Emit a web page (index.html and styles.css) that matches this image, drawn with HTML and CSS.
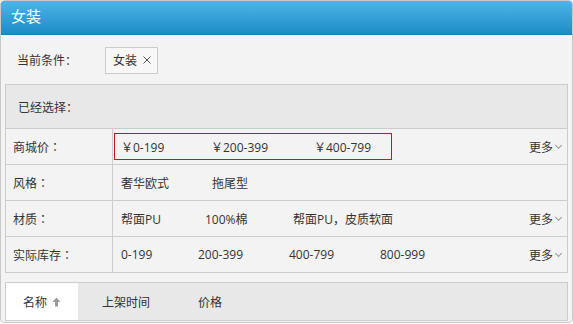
FILE: index.html
```html
<!DOCTYPE html>
<html lang="zh-CN">
  <head>
    <meta charset="UTF-8" />
    <title>女装</title>
    <link rel="stylesheet" href="styles.css">
  </head>
  <body>
    <div class="panel">
      <div class="panel-head">女装</div>
      <div class="panel-body">
        <div class="current">
          <span class="current-label">当前条件<span class="colon">：</span></span>
          <span class="tag">
            女装
            <svg class="tag-x" width="8" height="8" viewBox="0 0 8 8">
              <path d="M0.5 0.5 L7.5 7.5 M7.5 0.5 L0.5 7.5" stroke="#555" stroke-width="1" fill="none"></path>
            </svg>
          </span>
        </div>

        <div class="filter">
          <div class="selected">已经选择<span class="colon">：</span></div>

          <div class="row">
            <div class="row-label">商城价<span class="colon">：</span></div>
            <div class="row-values">
              <div class="options active">
                <span class="opt w90">￥0-199</span>
                <span class="opt w103">￥200-399</span>
                <span class="opt">￥400-799</span>
              </div>
            </div>
            <div class="more">更多<span class="chev"></span></div>
          </div>

          <div class="row">
            <div class="row-label">风格<span class="colon">：</span></div>
            <div class="row-values">
              <div class="options">
                <span class="opt w91">奢华欧式</span>
                <span class="opt">拖尾型</span>
              </div>
            </div>
          </div>

          <div class="row">
            <div class="row-label">材质<span class="colon">：</span></div>
            <div class="row-values">
              <div class="options">
                <span class="opt w84">帮面PU</span>
                <span class="opt w88">100%棉</span>
                <span class="opt">帮面PU<span class="colon">，</span>皮质软面</span>
              </div>
            </div>
            <div class="more">更多<span class="chev"></span></div>
          </div>

          <div class="row">
            <div class="row-label">实际库存<span class="colon">：</span></div>
            <div class="row-values">
              <div class="options">
                <span class="opt w77">0-199</span>
                <span class="opt w91">200-399</span>
                <span class="opt w91">400-799</span>
                <span class="opt">800-999</span>
              </div>
            </div>
            <div class="more">更多<span class="chev"></span></div>
          </div>
        </div>

        <div class="sortbar">
          <div class="sort active">
            名称
            <svg class="arrow" width="9" height="10" viewBox="0 0 9 10">
              <path d="M4.5 0.5 L8.5 5 L6 5 L6 9.5 L3 9.5 L3 5 L0.5 5 Z" fill="#999"></path>
            </svg>
          </div>
          <div class="sort">上架时间</div>
          <div class="sort">价格</div>
        </div>
      </div>
    </div>
  </body>
</html>
```

FILE: styles.css
```css
body {
  margin: 0;
  font-family: "Open Sans", "Noto Sans CJK SC", sans-serif;
  font-size: 12px;
  color: #333;
  background: #fff;
}
.panel {
  width: 573px;
  height: 323px;
  box-sizing: border-box;
  border: 1px solid #c8c8c8;
  border-radius: 4px;
  overflow: hidden;
  background: #f3f3f3;
}
.panel-head {
  height: 35px;
  line-height: 33px;
  padding-left: 11px;
  color: #fff;
  font-size: 15px;
  background: linear-gradient(to bottom, #4fb6e8, #1d8cc6);
  border-bottom: 1px solid #1a7fb5;
  box-sizing: border-box;
  margin: -1px -1px 0;
}
.panel-body {
  padding: 0 4px;
}
.colon {
  font-family: "Noto Sans CJK TC", sans-serif;
}
.current {
  display: flex;
  align-items: center;
  height: 49px;
  padding-left: 12px;
}
.current-label {
  width: 88px;
}
.tag {
  display: inline-flex;
  align-items: center;
  height: 25px;
  padding: 0 6px 0 7px;
  border: 1px solid #ccc;
  background: #f7f7f7;
  margin-top: 1px;
}
.tag-x {
  margin-left: 6px;
}
.filter {
  border: 1px solid #ccc;
}
.selected {
  height: 43px;
  line-height: 43px;
  padding-left: 12px;
  background: #e8e8e8;
}
.row {
  display: flex;
  align-items: center;
  height: 35px;
  border-top: 1px solid #ccc;
}
.row-label {
  width: 107px;
  height: 100%;
  display: flex;
  align-items: center;
  padding-left: 7px;
  box-sizing: border-box;
  border-right: 1px solid #ccc;
}
.row-values {
  flex: 1;
  padding-left: 1px;
}
.options {
  display: flex;
  align-items: center;
  width: 270px;
  height: 25px;
  padding-left: 6px;
  border: 1px solid transparent;
}
.options.active {
  border-color: #c8161d;
}
.opt {
  flex-shrink: 0;
  white-space: nowrap;
}
.w77 { width: 77px; }
.w84 { width: 84px; }
.w88 { width: 88px; }
.w90 { width: 90px; }
.w91 { width: 91px; }
.w103 { width: 103px; }
.more {
  display: flex;
  align-items: center;
  padding-right: 6px;
}
.chev {
  width: 4px;
  height: 4px;
  margin-left: 3px;
  margin-top: -3px;
  border-right: 1px solid #999;
  border-bottom: 1px solid #999;
  transform: rotate(45deg);
}
.sortbar {
  display: flex;
  height: 37px;
  margin-top: 9px;
  border: 1px solid #ccc;
  background: #e8e8e8;
}
.sort {
  display: flex;
  align-items: center;
  padding: 0 24px;
  white-space: nowrap;
}
.sort.active {
  background: #fff;
  width: 72px;
  padding: 0;
  justify-content: center;
}
.arrow {
  margin-left: 5px;
}
```
